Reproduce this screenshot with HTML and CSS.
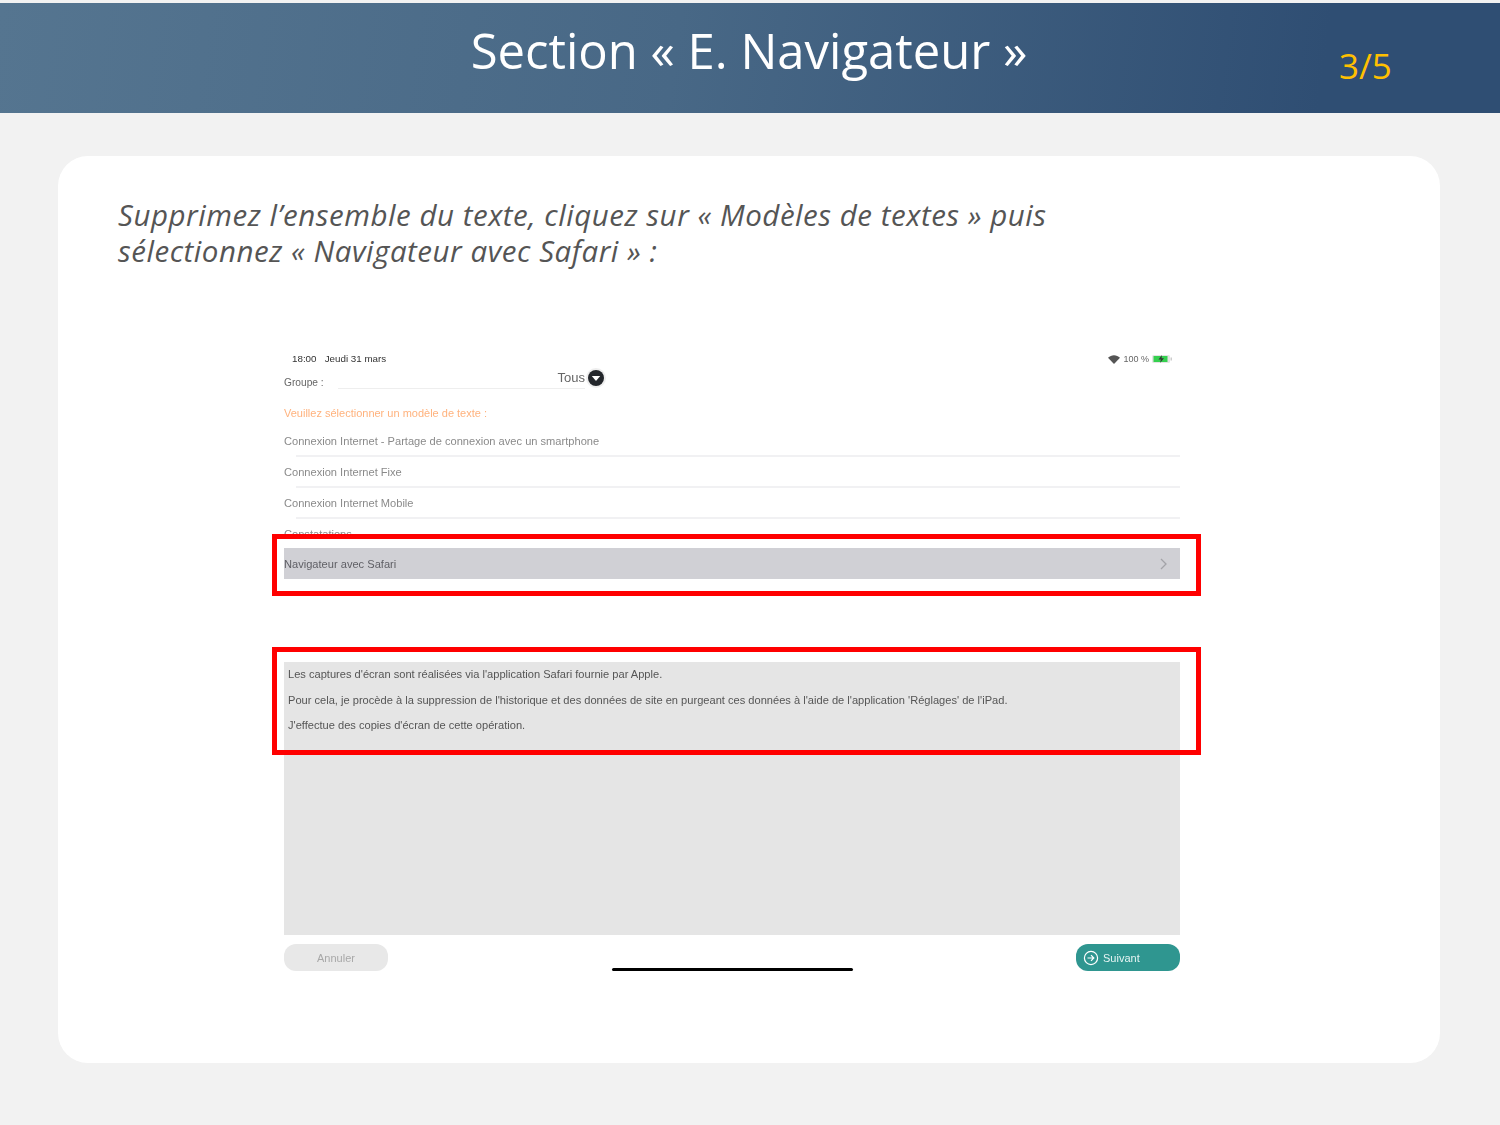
FILE: index.html
```html
<!DOCTYPE html>
<html>
<head>
    <title>Section E. Navigateur</title>
    <link rel="stylesheet" href="styles.css">
</head>
<body>
    <header class="banner">
        <h1>Section « E. Navigateur »</h1>
        <span class="page-count">3/5</span>
    </header>

    <main class="card">
        <p class="intro">Supprimez l’ensemble du texte, cliquez sur « Modèles de textes » puis<br>sélectionnez « Navigateur avec Safari » :</p>

        <div class="shot">
            <div class="status">
                <span>18:00 &nbsp; Jeudi 31 mars</span>
                <span class="status-right">
                    <svg class="wifi" viewBox="0 0 12 9" width="12" height="9"><path d="M6 9 0 2.800C3.400-.6 8.600-.6 12 2.800z" fill="#555"/></svg>
                    100 %
                    <svg class="battery" viewBox="0 0 20 8" width="20" height="8"><rect x="0" y="0" width="18" height="8" rx="1.500" fill="#e4e4e4"/><rect x="1.500" y="1" width="14" height="6" fill="#35d04f"/><rect x="18.500" y="2.500" width="1.500" height="3" fill="#ccc"/><path d="M10 0 6.500 4.500h2.500L8 8l4-4.800H9.500z" fill="#333"/></svg>
                </span>
            </div>

            <div class="group">
                <span class="group-label">Groupe :</span>
                <span class="group-field">Tous</span>
                <svg class="group-btn" viewBox="0 0 20 20" width="20" height="20"><circle cx="10" cy="10" r="10" fill="#eee"/><circle cx="10" cy="10" r="8" fill="#23262b"/><path d="M5.800 8h8.400L10 13z" fill="#fff"/></svg>
            </div>

            <div class="prompt">Veuillez sélectionner un modèle de texte :</div>

            <ul class="models">
                <li>Connexion Internet - Partage de connexion avec un smartphone</li>
                <li>Connexion Internet Fixe</li>
                <li>Connexion Internet Mobile</li>
                <li class="cut">Constatations</li>
                <li class="selected">
                    <span class="selected-label">Navigateur avec Safari</span>
                    <svg viewBox="0 0 7 12" width="7" height="12"><path d="M1 1l5 5-5 5" fill="none" stroke="#a3a3a8" stroke-width="1.300"/></svg>
                </li>
            </ul>

            <div class="message">
                <p>Les captures d'écran sont réalisées via l'application Safari fournie par Apple.</p>
                <p>Pour cela, je procède à la suppression de l'historique et des données de site en purgeant ces données à l'aide de l'application 'Réglages' de l'iPad.</p>
                <p>J'effectue des copies d'écran de cette opération.</p>
            </div>

            <div class="actions">
                <button type="button" class="btn btn-cancel">Annuler</button>
                <button type="button" class="btn btn-next">
                    <svg viewBox="0 0 16 16" width="16" height="16"><circle cx="8" cy="8" r="6.600" fill="none" stroke="#fff" stroke-width="1.200"/><path d="M4.500 8h6M8 5.200 10.800 8 8 10.800" fill="none" stroke="#fff" stroke-width="1.200"/></svg>
                    Suivant
                </button>
            </div>
            <div class="home-bar"></div>
        </div>

        <div class="mark mark-model"></div>
        <div class="mark mark-text"></div>
    </main>
</body>
</html>
```

FILE: styles.css
```css
body {
    font-family: "Open Sans", sans-serif;
    background-color: #f2f2f2;
    margin: 0;
    padding: 3px 0 0;
    height: 1122px;
    overflow: hidden;
}

.banner {
    position: relative;
    height: 110px;
    display: flex;
    justify-content: center;
    background: linear-gradient(98deg, #557590 0%, #486886 45%, #2f4e73 88%, #2f4e73 100%);
}

.banner h1 {
    margin: 19px 0 0 -2px;
    font-size: 49px;
    line-height: 56px;
    font-weight: 400;
    color: #fff;
}

.page-count {
    position: absolute;
    left: 1339px;
    top: 43px;
    font-size: 35px;
    line-height: 40px;
    color: #ffc000;
}

.card {
    position: relative;
    width: 1382px;
    height: 907px;
    margin: 43px 0 0 58px;
    background-color: #fff;
    border-radius: 30px;
    overflow: hidden;
}

.intro {
    margin: 0;
    padding: 41px 0 0 60px;
    font-size: 29.500px;
    letter-spacing: 0.53px;
    line-height: 36px;
    font-style: italic;
    color: #555;
}

.shot {
    width: 896px;
    margin: 83px 0 0 226px;
    font-family: "Liberation Sans", Arial, sans-serif;
    filter: blur(0.6px);
}

.status {
    display: flex;
    justify-content: space-between;
    height: 14px;
    padding: 0 8px;
    font-size: 9.800px;
    line-height: 14px;
    color: #333;
}

.status-right {
    display: flex;
    align-items: center;
    gap: 3px;
    font-size: 9px;
    color: #666;
}

.group {
    display: flex;
    align-items: center;
    height: 24px;
    width: 322px;
}

.group-label {
    width: 54px;
    font-size: 10.200px;
    color: #666;
    padding-top: 9px;
}

.group-field {
    flex: 1;
    height: 21px;
    line-height: 21px;
    text-align: right;
    font-size: 13px;
    color: #666;
    border-bottom: 1px solid #eee;
    margin-right: 1px;
}

.prompt {
    margin-top: 13px;
    height: 20px;
    line-height: 20px;
    font-size: 11px;
    color: #ffb27d;
}

.models {
    list-style: none;
    margin: 3px 0 0;
    padding: 0;
    font-size: 11.100px;
    color: #8a8a8a;
}

.models li {
    height: 31px;
    line-height: 31px;
    background: linear-gradient(#f1f1f3, #f1f1f3) no-repeat 12px 100% / calc(100% - 12px) 2px;
}

.models li.cut {
    height: 15px;
    overflow: hidden;
    background: none;
}

.models li.selected {
    display: flex;
    justify-content: space-between;
    align-items: center;
    margin-top: 14px;
    padding-right: 13px;
    background: #d0d0d5;
    color: #5f5f65;
}

.selected-label {
    padding-top: 2px;
}

.message {
    height: 273px;
    margin-top: 83px;
    padding-top: 2px;
    box-sizing: border-box;
    background-color: #e5e5e5;
    font-size: 11.100px;
    color: #555;
}

.message p {
    margin: 0;
    padding-left: 4px;
    height: 25.500px;
    line-height: 21px;
}

.actions {
    display: flex;
    justify-content: space-between;
    margin-top: 9px;
}

.btn {
    display: flex;
    align-items: center;
    justify-content: center;
    width: 104px;
    height: 27px;
    padding: 0;
    border: none;
    border-radius: 12px;
    font-family: inherit;
    font-size: 11px;
}

.btn-cancel {
    background-color: #e8e8e8;
    color: #a8a8a8;
}

.btn-next {
    justify-content: flex-start;
    gap: 4px;
    padding-left: 7px;
    background-color: #2f9690;
    color: #e6f4f3;
}

.home-bar {
    width: 241px;
    height: 3px;
    margin: -3px 0 0 328px;
    border-radius: 2px;
    background-color: #000;
}

.mark {
    position: absolute;
    left: 214px;
    width: 929px;
    box-sizing: border-box;
    border: 5px solid #f00;
}

.mark-model {
    top: 378px;
    height: 62px;
}

.mark-text {
    top: 491px;
    height: 108px;
}
```
